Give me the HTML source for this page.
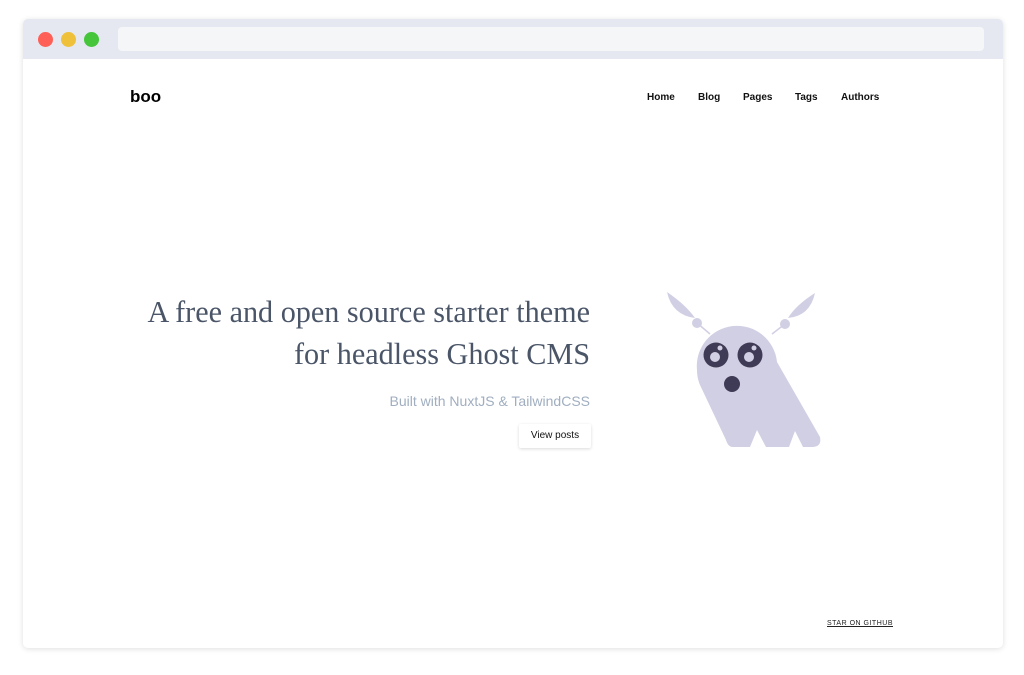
<!DOCTYPE html>
<html><head><style>
body{margin:0;width:1024px;height:675px;background:#fff;font-family:"Liberation Sans",sans-serif;position:relative;overflow:hidden}
.win{position:absolute;left:23px;top:19px;width:980px;height:629px;border-radius:5px;box-shadow:0 1px 6px rgba(0,0,0,.13);background:#fff;overflow:hidden}
.bar{height:40px;background:#e5e8f0;position:relative}
.dot{position:absolute;top:13px;width:15px;height:15px;border-radius:50%}
.addr{position:absolute;left:95px;top:8px;width:866px;height:24px;background:#f5f6f8;border-radius:4px}
.logo{position:absolute;left:107px;top:68px;font-weight:bold;font-size:17px;color:#000}
.nav{position:absolute;top:73px;font-size:10px;font-weight:bold;color:#111}
.h1{position:absolute;right:413px;top:272px;text-align:right;font-family:"Liberation Serif",serif;font-size:30.2px;line-height:42px;color:#4a5568;white-space:nowrap}
.sub{position:absolute;right:413px;top:374px;font-size:14px;color:#a0aec0}
.btn{position:absolute;left:496px;top:405px;width:72px;height:24px;box-shadow:0 1px 3px rgba(0,0,0,.15);border-radius:2px;font-size:10px;line-height:24px;text-align:center;color:#111}
.gh{position:absolute;left:804px;top:601px;font-size:7px;letter-spacing:.5px;text-decoration:underline;color:#222}
</style></head><body>
<div class="win">
<div class="bar"><div class="dot" style="left:15px;background:#fe5f57"></div><div class="dot" style="left:38px;background:#efc13b"></div><div class="dot" style="left:61px;background:#44c53a"></div><div class="addr"></div></div>
<div class="logo">boo</div>
<div class="nav" style="left:624px">Home</div>
<div class="nav" style="left:675px">Blog</div>
<div class="nav" style="left:720px">Pages</div>
<div class="nav" style="left:772px">Tags</div>
<div class="nav" style="left:818px">Authors</div>
<div class="h1">A free and open source starter theme<br>for headless Ghost CMS</div>
<div class="sub">Built with NuxtJS &amp; TailwindCSS</div>
<div class="btn">View posts</div>
<div class="gh">STAR ON GITHUB</div>
</div>
<svg style="position:absolute;left:0;top:0" width="1024" height="675">
<g fill="#d1cfe3" stroke="none">
<path d="M667 292 Q672 315 695 318 Q686 305 667 292Z"/>
<circle cx="697" cy="323" r="5"/>
<path d="M815 293 Q810 316 788 318 Q796 305 815 293Z"/>
<circle cx="785" cy="324" r="5"/>
<path d="M697 370 A40 40 0 0 1 777 362 L820 437 Q822 447 812 447 L803 447 L795 431 L789 447 L766 447 L757 430 L750 447 L733 447 Q728 447 726 440 L700 385 Q697 378 697 370Z"/>
</g>
<path d="M697 323 L710 334 M785 324 L772 334" stroke="#d1cfe3" stroke-width="1.5"/>
<circle cx="716" cy="355" r="12.5" fill="#3f3a55"/>
<circle cx="750" cy="355" r="12.5" fill="#3f3a55"/>
<circle cx="715" cy="357" r="5" fill="#d1cfe3"/>
<circle cx="749" cy="357" r="5" fill="#d1cfe3"/>
<circle cx="720" cy="348" r="2.5" fill="#d1cfe3"/>
<circle cx="754" cy="348" r="2.5" fill="#d1cfe3"/>
<circle cx="732" cy="384" r="8" fill="#3f3a55"/>
</svg>
</body></html>
